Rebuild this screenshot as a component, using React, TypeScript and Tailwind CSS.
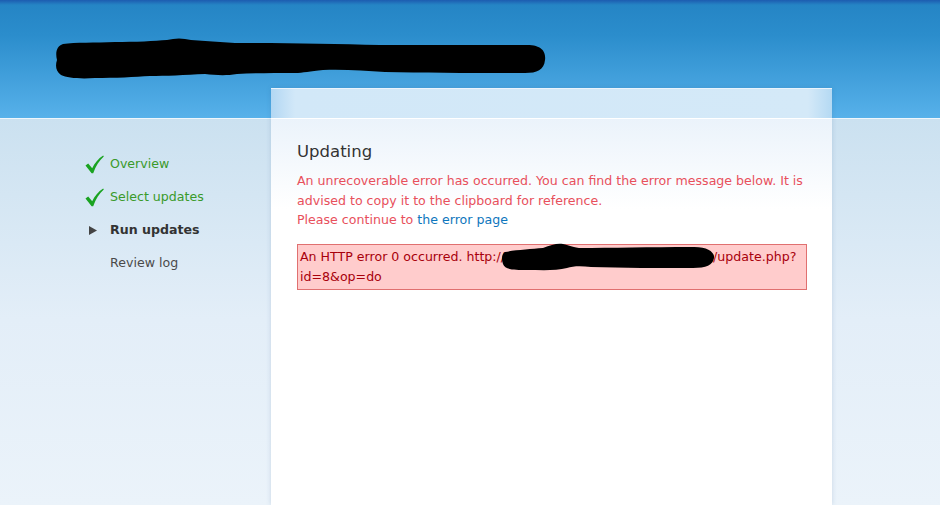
import React from 'react';

type Step = { label: string; state: 'done' | 'active' | 'todo' };

const steps: Step[] = [
  { label: 'Overview', state: 'done' },
  { label: 'Select updates', state: 'done' },
  { label: 'Run updates', state: 'active' },
  { label: 'Review log', state: 'todo' },
];

function Check() {
  return (
    <svg width="19" height="19" viewBox="0 0 19 19" className="shrink-0">
      <path
        d="M0.5 10.6 L3.2 8.6 L7.2 13.2 C9.6 8.2 13.2 3.8 18.2 0.6 L18.8 1.4 C14.4 5.4 10.8 10.6 8.2 18.2 L6.6 18.2 Z"
        fill="#1aa321"
      />
    </svg>
  );
}

function Arrow() {
  return (
    <span className="flex w-[19px] shrink-0 justify-start pl-[4px]">
      <svg width="8" height="9" viewBox="0 0 8 9">
        <polygon points="0,0 8,4.5 0,9" fill="#444" />
      </svg>
    </span>
  );
}

// hand-drawn marker over the site name
function SiteMark() {
  return (
    <svg width="492" height="42" viewBox="0 0 492 42" className="absolute left-[55px] top-[38px]">
      <path
        d="M8 6 C20 4 40 5 60 4 C80 4 100 3 112 2 C120 0 128 0 136 2 C150 3 165 4 180 5 C230 5 280 6 325 7 C380 7 430 7 472 7 C488 7 491 15 490 22 C489 32 482 35 470 35 C420 35 370 35 330 34 C310 33 290 31 268 32 C255 33 248 35 240 35 C220 35 200 35 182 36 C170 38 160 37 150 36 C130 37 110 38 95 38 C80 39 60 40 40 40 C25 41 12 40 6 37 C1 33 0 28 2 22 C0 14 2 8 8 6 Z"
        fill="#000"
      />
    </svg>
  );
}

// marker over the host part of the url
function HostMark() {
  return (
    <svg width="216" height="30" viewBox="0 0 216 30" className="-my-[6px] -ml-[4px] -mr-[4px] inline-block align-middle">
      <path
        d="M4 10 C14 8 30 7 42 6 C50 3 56 1 62 2 C68 3 70 5 78 6 C110 6 150 5 190 5 C206 4 214 10 213 16 C212 23 205 26 192 26 C160 26 120 26 90 25 C80 24 72 24 66 26 C55 29 40 28 26 28 C14 28 4 28 2 22 C0 16 1 12 4 10 Z"
        fill="#000"
      />
    </svg>
  );
}

export default function App() {
  return (
    <div className="relative flex h-[505px] w-[940px] flex-col overflow-hidden font-['DejaVu_Sans',Verdana,sans-serif] text-[12.6px]">
      <header className="relative h-[119px] shrink-0 border-b border-[#eef6fc] bg-[linear-gradient(to_bottom,#1d5cb0,#2585c5_5px,#2b8dcc_35px,#57b1ea)]">
        <SiteMark />
      </header>

      <div className="flex flex-1 bg-[linear-gradient(to_bottom,#cbe1f0,#e3eef8_200px,#ebf3fa)]">
        <nav className="w-[271px] shrink-0 pl-[85px] pt-[29px]">
          <ul className="flex flex-col">
            {steps.map((step) => (
              <li key={step.label} className="flex h-[33px] items-center gap-[6px]">
                {step.state === 'done' ? <Check /> : step.state === 'active' ? <Arrow /> : <span className="w-[19px]" />}
                <span
                  className={
                    step.state === 'done'
                      ? 'text-[#3a9a2a]'
                      : step.state === 'active'
                        ? 'font-bold text-[#333]'
                        : 'text-[#4a4a4a]'
                  }
                >
                  {step.label}
                </span>
              </li>
            ))}
          </ul>
        </nav>

        <main className="relative z-10 -mt-[31px] flex w-[561px] shrink-0 flex-col shadow-[0_0_5px_rgba(40,90,140,0.18)]">
          <div className="h-[31px] shrink-0 border-t border-[#eaf4fc] border-b border-b-white bg-[linear-gradient(to_right,#b2d7f3,#d2e8f8_24px,#d4e9f8_calc(100%-24px),#b4d9f3)]" />
          <div className="flex-1 bg-[linear-gradient(to_bottom,#ebf3fb,#ffffff_90px)] pl-[26px] pr-[25px] pt-[22px]">
            <h2 className="text-[16.5px] leading-[22px] text-[#333]">Updating</h2>
            <p className="mt-[8px] leading-[19.5px] text-[#e8505c]">
              An unrecoverable error has occurred. You can find the error message below. It is advised to copy it to
              the clipboard for reference.
              <br />
              Please continue to <a className="text-[#0e76bd]">the error page</a>
            </p>
            <div className="mt-[14px] border border-[#e07070] bg-[#ffcccc] px-[2px] py-[2px] leading-[20px] text-[#a8000b]">
              An HTTP error 0 occurred. http://
              <HostMark />
              /update.php?
              <wbr />
              id=8&amp;op=do
            </div>
          </div>
        </main>

        <div className="flex-1" />
      </div>
    </div>
  );
}
